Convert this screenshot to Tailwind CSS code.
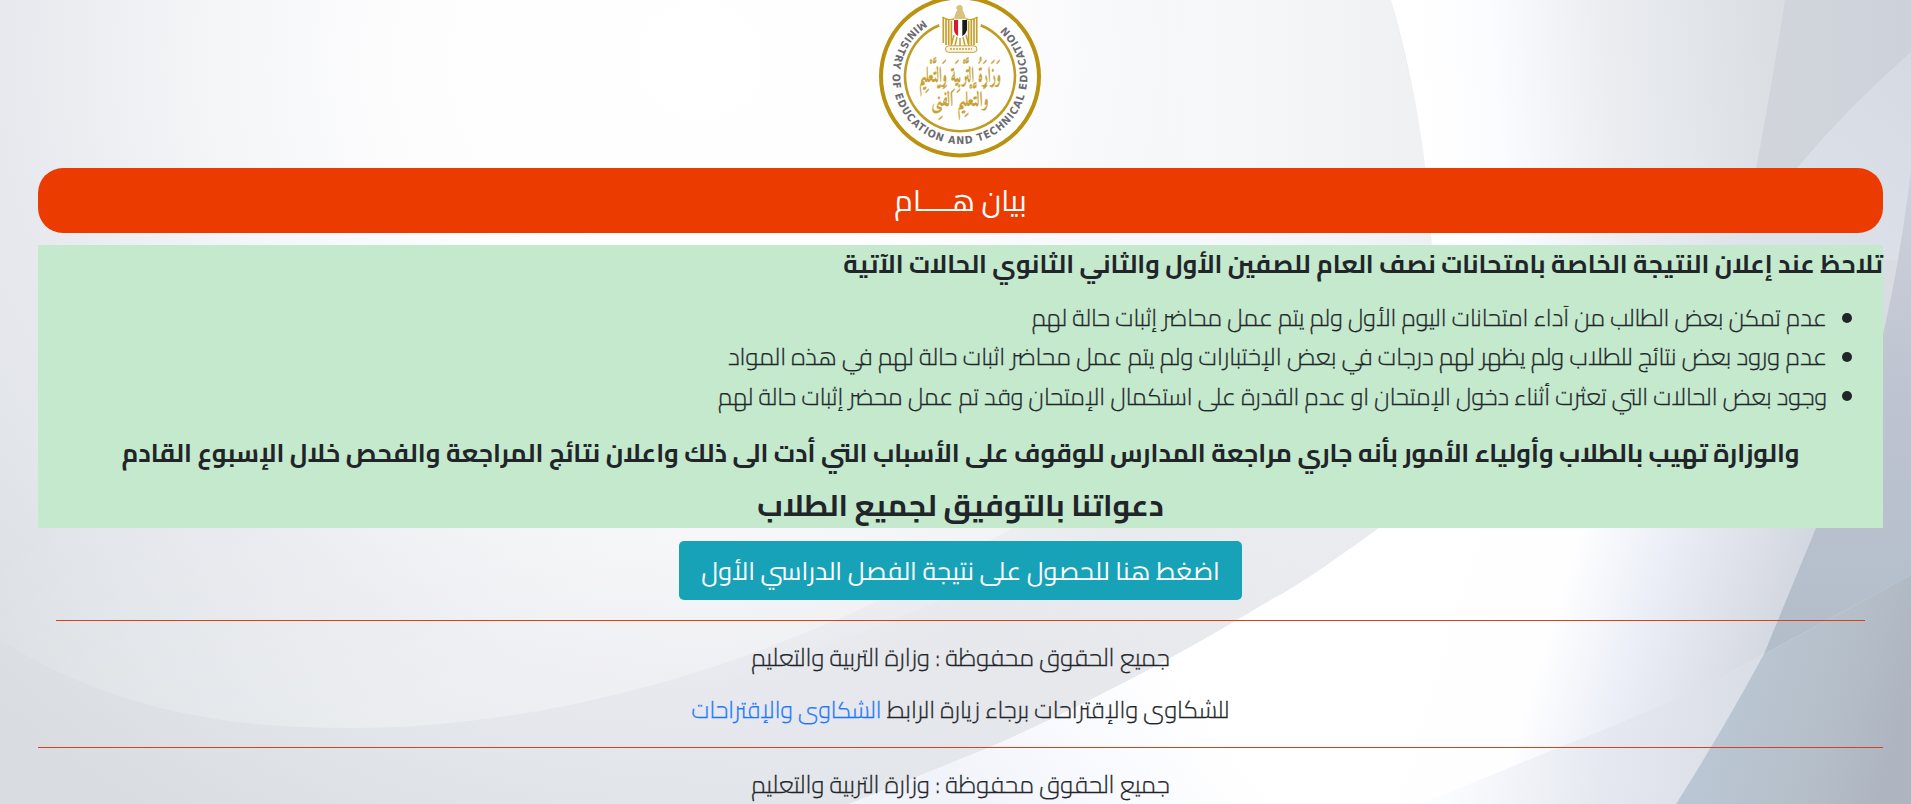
<!DOCTYPE html>
<html lang="ar" dir="rtl">
<head>
<meta charset="utf-8">
<title>بيان هام</title>
<script src="https://cdn.jsdelivr.net/npm/@tailwindcss/browser@4"></script>
</head>
<body class="relative h-[804px] w-[1911px] overflow-hidden bg-[#eceef1] font-['Cairo','DejaVu_Sans_Condensed',sans-serif] text-[#212529]">

<!-- Page backdrop -->
<svg class="absolute inset-0 -z-10 h-full w-full" viewBox="0 0 1911 804" preserveAspectRatio="none" aria-hidden="true">
  <defs>
    <radialGradient id="base" gradientUnits="userSpaceOnUse" cx="0" cy="0" r="1" gradientTransform="translate(700 60) scale(1000 900)">
      <stop offset="0" stop-color="#ffffff"/><stop offset=".3" stop-color="#fdfdfe"/><stop offset=".5" stop-color="#f4f5f7"/><stop offset=".69" stop-color="#e8e9ee"/><stop offset=".85" stop-color="#e0e4e8"/><stop offset="1" stop-color="#d9dde1"/>
    </radialGradient>
    <linearGradient id="panel" gradientUnits="userSpaceOnUse" x1="1420" y1="120" x2="1800" y2="90">
      <stop offset="0" stop-color="#ffffff"/><stop offset=".2" stop-color="#fbfcff"/><stop offset=".5" stop-color="#ebedf1"/><stop offset=".9" stop-color="#dce0e4"/><stop offset="1" stop-color="#d9dde2"/>
    </linearGradient>
    <linearGradient id="low" gradientUnits="userSpaceOnUse" x1="1400" y1="560" x2="1790" y2="680">
      <stop offset="0" stop-color="#ffffff"/><stop offset=".4" stop-color="#fefeff"/><stop offset=".6" stop-color="#eceff7"/><stop offset="1" stop-color="#cfd3db"/>
    </linearGradient>
    <linearGradient id="lowFade" x1="0" y1="0" x2="0" y2="1"><stop offset=".3" stop-color="#fff" stop-opacity="0"/><stop offset=".5" stop-color="#fff"/></linearGradient>
    <mask id="m" maskUnits="userSpaceOnUse" x="800" y="100" width="1111" height="704"><rect x="800" y="100" width="1111" height="704" fill="url(#lowFade)"/></mask>
    <linearGradient id="fold" gradientUnits="userSpaceOnUse" x1="1450" y1="760" x2="1760" y2="800">
      <stop offset="0" stop-color="#fbfcff"/><stop offset=".5" stop-color="#e5e8f0"/><stop offset="1" stop-color="#d8dce5"/>
    </linearGradient>
    <linearGradient id="dark" gradientUnits="userSpaceOnUse" x1="1740" y1="640" x2="1911" y2="690">
      <stop offset="0" stop-color="#bac6d3"/><stop offset=".5" stop-color="#b6c0cb"/><stop offset="1" stop-color="#aeb5c0"/>
    </linearGradient>
    <linearGradient id="strip" x1="0" y1="0" x2="1" y2="0"><stop offset="0" stop-color="#d3d7dc"/><stop offset="1" stop-color="#cdd1da"/></linearGradient>
    <linearGradient id="edge" gradientUnits="userSpaceOnUse" x1="0" y1="180" x2="0" y2="660"><stop offset="0" stop-color="#ccd1da"/><stop offset=".45" stop-color="#bec3d1"/><stop offset="1" stop-color="#b2bdca"/></linearGradient>
    <linearGradient id="cornerL" gradientUnits="userSpaceOnUse" x1="1911" y1="60" x2="1730" y2="260"><stop offset="0" stop-color="#d6dae3"/><stop offset="1" stop-color="#dfe3ec"/></linearGradient>
    <linearGradient id="band" gradientUnits="userSpaceOnUse" x1="640" y1="740" x2="1300" y2="560"><stop offset="0" stop-color="#e4e7eb" stop-opacity="0"/><stop offset=".5" stop-color="#e6e8ec" stop-opacity=".9"/><stop offset="1" stop-color="#eeeef1"/></linearGradient>
    <linearGradient id="faint" gradientUnits="userSpaceOnUse" x1="950" y1="800" x2="1150" y2="640"><stop offset="0" stop-color="#f1f3fa"/><stop offset=".6" stop-color="#fafbff"/><stop offset="1" stop-color="#ffffff"/></linearGradient>
    <linearGradient id="arc" gradientUnits="userSpaceOnUse" x1="180" y1="420" x2="400" y2="728"><stop offset="0" stop-color="#fff" stop-opacity="0"/><stop offset="1" stop-color="#fff" stop-opacity=".3"/></linearGradient>
    <linearGradient id="grayEdge" x1="0" y1="0" x2="1" y2="0"><stop offset="0" stop-color="#f8f9fa" stop-opacity="0"/><stop offset=".4" stop-color="#f7f8f9"/><stop offset="1" stop-color="#eff0f1"/></linearGradient>
  </defs>
  <rect width="1911" height="804" fill="url(#base)"/>
  <path d="M0 640C120 715 240 728 350 728C560 728 760 660 900 590L1100 480L0 420Z" fill="url(#arc)"/>
  <path d="M700 690C860 640 980 580 1120 528L1400 528L1271 620L1000 744L850 804H560C700 780 800 740 880 690Z" fill="url(#band)" opacity=".7"/>
  <path d="M1060 0H1391Q1433 160 1433 245H1060Z" fill="url(#grayEdge)"/>
  <path d="M1391 0C1420 100 1433 200 1433 290C1433 400 1440 480 1379 528C1340 556 1305 582 1271 600C1180 655 1090 703 991 747L850 804H1911V0Z" fill="url(#panel)"/>
  <path d="M1433 290C1433 400 1440 480 1379 528C1340 556 1305 582 1271 600C1180 655 1090 703 991 747L850 804H1911V290Z" fill="url(#low)" mask="url(#m)"/>
  <path d="M1375 604C1355 670 1335 710 1310 745L1271 804H850L991 747C1090 703 1180 655 1271 602Z" fill="url(#faint)"/>
  <path d="M1785 0H1911V60L1797 168L1720 260H1738Q1765 130 1785 0Z" fill="url(#strip)"/>
  <path d="M1911 52Q1850 105 1797 168L1715 260H1911Z" fill="url(#cornerL)"/>
  <path d="M1911 575L1763 654C1690 695 1630 720 1560 747L1420 804H1911Z" fill="url(#fold)"/>
  <path d="M1911 170Q1900 260 1884 330C1868 405 1845 460 1816 528L1764 654L1911 575Z" fill="url(#edge)"/>
  <path d="M1911 575L1764 654Q1720 735 1676 804H1911Z" fill="url(#dark)"/>
</svg>

<main class="mr-7 flex w-[1845px] flex-col items-center">
  <!-- Ministry seal -->
  <svg class="-mt-[5px] h-[163px] w-[163px] shrink-0" viewBox="879 -5 163 163" direction="ltr">
    <circle cx="960" cy="76.500" r="79" fill="#fff" stroke="#b9930f" stroke-width="4"/>
    <path d="M939.300 25.300A55 55 0 1 0 980.700 25.300" fill="none" stroke="#c09c22" stroke-width="2.600"/>
    <path id="ring" d="M923.200 19.900A67.500 67.500 0 1 0 1005.500 26.700" fill="none"/>
    <text direction="ltr" class="font-['DejaVu_Sans_Condensed','DejaVu_Sans',sans-serif] text-[10.600px] font-bold" fill="#6b6b70"><textPath href="#ring" textLength="335" lengthAdjust="spacing">MINISTRY OF EDUCATION AND TECHNICAL EDUCATION</textPath></text>
    <!-- Eagle -->
    <g fill="none" stroke="#c5a02c" stroke-width="1.700">
      <path d="M943.300 17V43M946 18.500V45M948.700 20V45M951.400 21V44M976.700 17V43M974 18.500V45M971.300 20V45M968.600 21V44"/>
      <path d="M942.500 17Q948 21 954 19M977.500 17Q972 21 966 19" stroke-width="1.400"/>
      <path d="M954 35L951 46M957 37L955 46M960 38V46M963 37L965 46M966 35L969 46" stroke-width="1.500"/>
    </g>
    <path d="M956 8Q957 4.500 960.500 5Q963.500 6 962.500 10Q965 14 966 19H954Q955 13 957.500 10Z" fill="#d9c27a"/>
    <path d="M954 20H958.300V36Q954.500 34 954 30Z" fill="#cf1f2e"/>
    <path d="M958.300 20H962.300V36L960.300 37L958.300 36Z" fill="#fff"/>
    <path d="M962.300 20H967V30Q966 34 962.300 36Z" fill="#191919"/>
    <rect x="945.500" y="45.800" width="31.500" height="6.500" rx="3.200" fill="#fbf6e4" stroke="#c5a445" stroke-width="1"/>
    <path d="M950 49H972" stroke="#c5a445" stroke-width="1.300" stroke-dasharray="2 1"/>
    <g fill="#c7a232" stroke="#c7a232" stroke-width=".3" text-anchor="middle" class="font-['Amiri','DejaVu_Sans',serif] font-bold">
      <text direction="rtl" x="960" y="82" class="text-[22px]" textLength="82" lengthAdjust="spacingAndGlyphs">وَزَارَةُ التَّرْبِيَةِ وَالتَّعْلِيم</text>
      <text direction="rtl" x="960" y="106" class="text-[21px]" textLength="57" lengthAdjust="spacingAndGlyphs">وَالتَّعْلِيم الفَنِّى</text>
    </g>
  </svg>

  <h2 class="mt-[10px] flex h-[65px] w-full items-center justify-center rounded-[25px] bg-[#eb3b00] text-[29.700px] font-normal text-white">بيان هــــام</h2>

  <section class="mt-3 flex h-[283px] w-full flex-col bg-[#c4e9cd]">
    <h4 class="h-[38px] text-[25px] leading-[38px] font-bold whitespace-nowrap">تلاحظ عند إعلان النتيجة الخاصة بامتحانات نصف العام للصفين الأول والثاني الثانوي الحالات الآتية</h4>
    <ul class="mt-[15px] pr-[31px] leading-[39.300px] font-light whitespace-nowrap [-webkit-text-stroke:0.3px_#212529]">
      <li class="flex items-center gap-[15px] text-[23.770px]"><span class="size-[10px] rounded-full bg-[#212529]"></span>عدم تمكن بعض الطالب من آداء امتحانات اليوم الأول ولم يتم عمل محاضر إثبات حالة لهم</li>
      <li class="flex items-center gap-[15px] text-[24.100px]"><span class="size-[10px] rounded-full bg-[#212529]"></span>عدم ورود بعض نتائج للطلاب ولم يظهر لهم درجات في بعض الإختبارات ولم يتم عمل محاضر اثبات حالة لهم في هذه المواد</li>
      <li class="flex items-center gap-[15px] text-[23.720px]"><span class="size-[10px] rounded-full bg-[#212529]"></span>وجود بعض الحالات التي تعثرت أثناء دخول الإمتحان او عدم القدرة على استكمال الإمتحان وقد تم عمل محضر إثبات حالة لهم</li>
    </ul>
    <h4 class="mt-[18px] text-center text-[25.230px] leading-[38px] font-bold whitespace-nowrap">والوزارة تهيب بالطلاب وأولياء الأمور بأنه جاري مراجعة المدارس للوقوف على الأسباب التي أدت الى ذلك واعلان نتائج المراجعة والفحص خلال الإسبوع القادم</h4>
    <h3 class="mt-[10px] text-center text-[30.300px] leading-[46px] font-bold">دعواتنا بالتوفيق لجميع الطلاب</h3>
  </section>

  <a class="mt-[13px] flex h-[59px] w-[563px] items-center justify-center rounded-[5px] bg-[#17a2b8] text-[25.300px] font-normal text-white">اضغط هنا للحصول على نتيجة الفصل الدراسي الأول</a>
  <div class="mt-5 h-px w-[1809px] shrink-0 bg-[#d3431c]"></div>
  <p class="mt-[18px] text-[24.200px] leading-9 font-light [-webkit-text-stroke:0.3px_#212529]">جميع الحقوق محفوظة : وزارة التربية والتعليم</p>
  <p class="mt-[17px] text-[23.900px] leading-9 font-light [-webkit-text-stroke:0.3px_#212529]">للشكاوى والإقتراحات برجاء زيارة الرابط <a class="text-[23.300px] text-[#1a78ff] [-webkit-text-stroke:0.3px_#1a78ff]">الشكاوى والإقتراحات</a></p>
  <div class="mt-[19px] h-px w-full shrink-0 bg-[#d3431c]"></div>
  <p class="mt-[18px] text-[24.200px] leading-9 font-light [-webkit-text-stroke:0.3px_#212529]">جميع الحقوق محفوظة : وزارة التربية والتعليم</p>
</main>
</body>
</html>
